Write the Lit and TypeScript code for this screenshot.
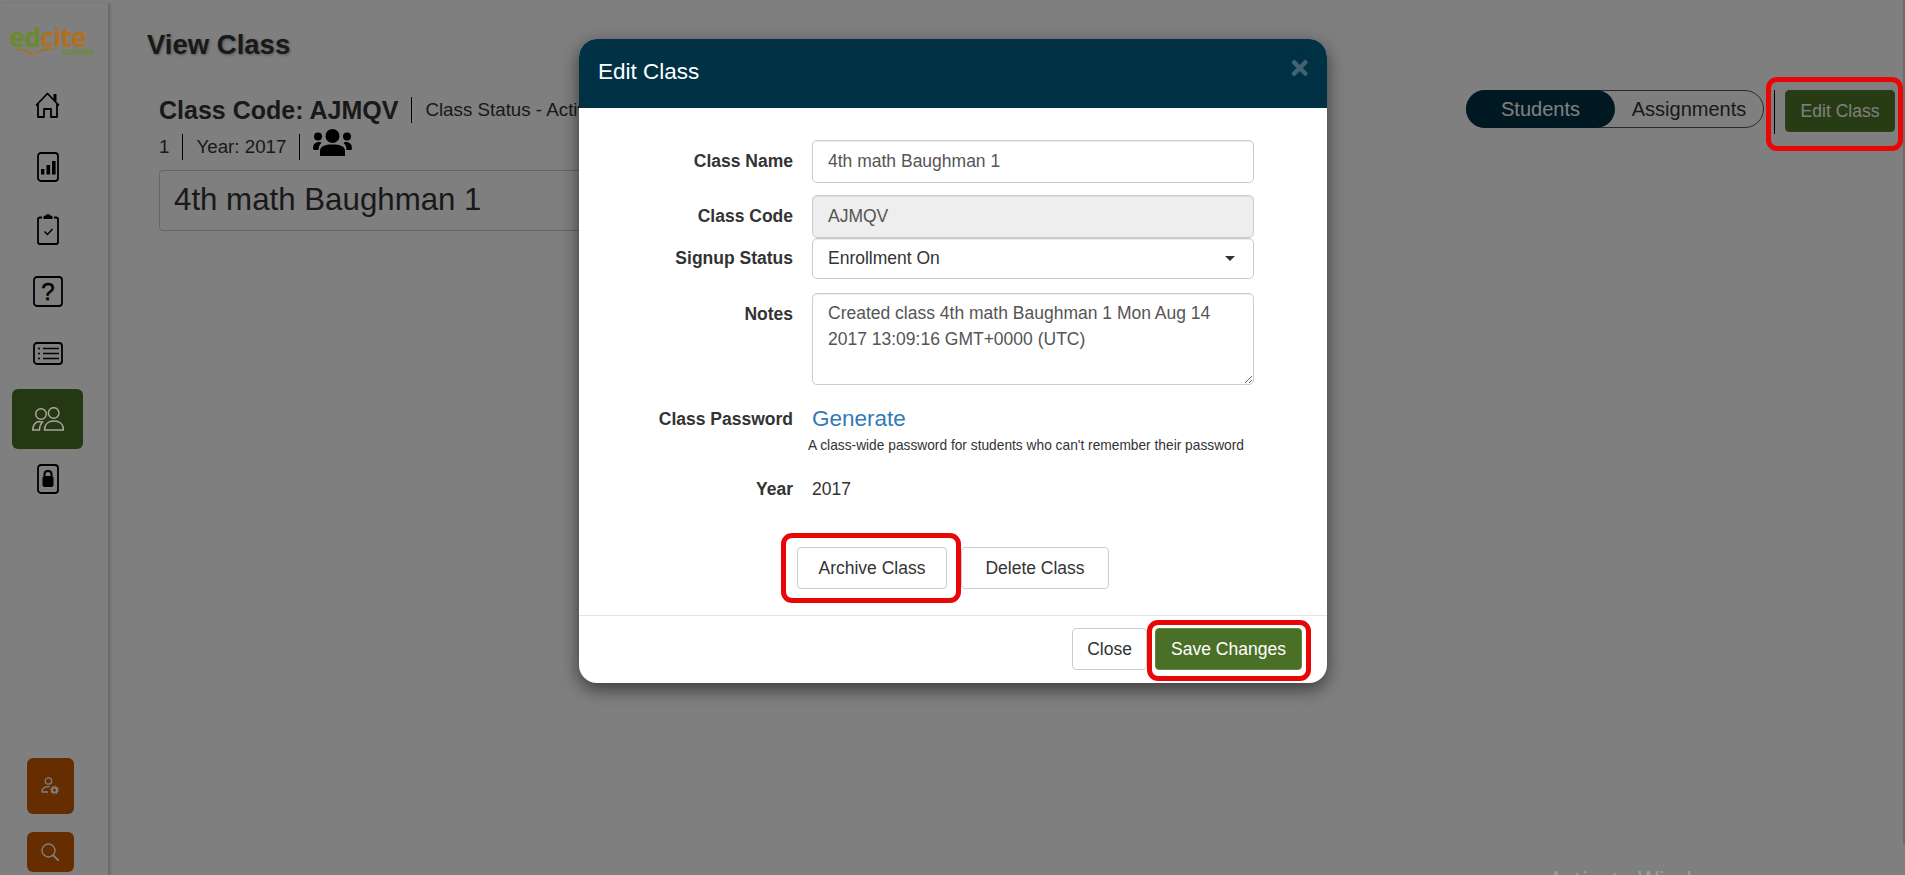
import { LitElement, html, css, svg } from "lit";
import { customElement } from "lit/decorators.js";

const FONT = css`"Liberation Sans", Arial, sans-serif`;
const INK = "#000";

const navIcons = [
  { w: 25, h: 26, body: svg`<path d="M1 13.500 L12.500 1.500 L24 13.500 M3 11.500 V25 H9 V17 H16 V25 H22 V11.500" fill="none" stroke="${INK}" stroke-width="1.800" stroke-linejoin="round"/><rect x="18.500" y="2" width="3" height="7" fill="${INK}"/>` },
  { w: 22, h: 30, body: svg`<rect x="1" y="1" width="20" height="28" rx="3" fill="none" stroke="${INK}" stroke-width="1.800"/><rect x="4" y="17" width="3.400" height="5.500" fill="${INK}"/><rect x="9.500" y="13" width="3.600" height="9.500" fill="${INK}"/><rect x="15" y="9" width="3.600" height="13.500" fill="${INK}"/>` },
  { w: 22, h: 31, body: svg`<path d="M5 3.500 H3 Q1 3.500 1 5.500 V28 Q1 30 3 30 H19 Q21 30 21 28 V5.500 Q21 3.500 19 3.500 H17" fill="none" stroke="${INK}" stroke-width="1.800"/><path d="M6.500 5 V3 Q6.500 1.500 8 1.500 H9 Q9.500 0 11 0 Q12.500 0 13 1.500 H14 Q15.500 1.500 15.500 3 V5 Z" fill="${INK}"/><path d="M7.500 17.500 L10.500 20.500 L15.500 15" fill="none" stroke="${INK}" stroke-width="1.500"/>` },
];

@customElement("app-root")
export class AppRoot extends LitElement {
  static styles = css`
    :host { display: block; height: 875px; width: 1905px; position: relative; overflow: hidden; background: #fff; font-family: ${FONT}; color: #333; }
    * { box-sizing: border-box; }
    .page { display: flex; height: 875px; }
    .side { width: 110px; flex: none; margin-top: 3px; border-right: 2px solid #d8d8d8; box-shadow: 1px 0 2px rgba(0,0,0,.12); display: flex; flex-direction: column; align-items: center; }
    .logo { position: relative; z-index: 2; align-self: flex-start; margin: 23px 0 0 9px; height: 37px; width: 90px; }
    .logo-word { display: block; font: 700 27px/22px "Open Sans", sans-serif; letter-spacing: -1px; color: #b0701e; white-space: nowrap; }
    .logo-word b { font-weight: 700; color: #6b8a2c; }
    .logo-row { display: flex; align-items: flex-start; gap: 5px; margin-left: 1px; }
    .logo-sub { font: 700 8.500px/8px "Liberation Sans", sans-serif; color: #6b8a2c; }
    .nav { display: flex; flex-direction: column; align-items: center; margin: 11px 13px 0 0; }
    .nav-item { width: 71px; height: 62px; display: flex; align-items: center; justify-content: center; border-radius: 6px; }
    .nav-item.on { background: #4a7028; height: 60px; margin: 5px 0 -1px; }
    .nav-item svg { display: block; }
    .nav-item.on svg { position: relative; z-index: 2; }
    .side-foot { margin: auto 8px 3px 0; display: flex; flex-direction: column; align-items: center; gap: 18px; }
    .tool { width: 47px; height: 56px; background: #cc5a00; border-radius: 6px; display: flex; align-items: center; justify-content: center; }
    .tool.short { height: 40px; }

    .main { flex: 1; min-width: 0; padding: 28px 0 0 37px; }
    h1 { font-size: 27.500px; line-height: 34px; font-weight: 700; margin: 0; color: #333; text-shadow: 1px 1px 3px rgba(0,0,0,.35); }
    .content { display: flex; justify-content: space-between; padding: 0 10px 0 12px; margin-top: 30px; }
    .info { width: 450px; }
    .line { display: flex; align-items: center; white-space: nowrap; height: 36px; font-size: 18.750px; }
    .line + .line { padding-top: 1px; }
    .code { font-size: 25px; font-weight: 700; }
    .sep { width: 1px; background: #000; height: 26px; margin: 0 13px; flex: none; }
    .group { margin-top: -9px; flex: none; }
    .name { border: 1px solid #ccc; border-radius: 4px; height: 61px; width: 700px; margin-top: 6px; font-size: 31.250px; padding: 0 14px 2px; display: flex; align-items: center; white-space: nowrap; }
    .right { display: flex; align-items: flex-start; margin-top: -2px; }
    .toggle { display: flex; width: 298px; height: 38px; border: 1px solid #555; border-radius: 20px; font-size: 20px; }
    .toggle span { display: flex; align-items: center; justify-content: center; border-radius: 20px; }
    .toggle .t-on { width: 149px; background: #013145; color: #fff; margin: -1px 0 -1px -1px; height: 38px; }
    .toggle .t-off { flex: 1; color: #333; }
    .vr { width: 1px; height: 44px; background: #000; margin: 0 10px 0 10px; }
    .edit { width: 110px; height: 42px; background: #4f7729; color: #fff; border: 1px solid #5b8534; border-radius: 4px; display: flex; align-items: center; justify-content: center; font-size: 17.500px; }

    .backdrop { position: absolute; inset: 0; background: rgba(0,0,0,.5); z-index: 1; }
    .scroll { position: absolute; right: 0; top: 0; width: 2px; height: 844px; background: #6c6c6c; z-index: 2; }
    .watermark { position: absolute; left: 1549px; top: 863px; font: 400 22.500px/32px "Open Sans", sans-serif; color: #a0a0a0; white-space: nowrap; z-index: 2; }

    .modal { position: absolute; z-index: 3; left: 579px; top: 39px; width: 748px; height: 644px; background: #fff; border-radius: 18px; box-shadow: 0 6px 18px rgba(0,0,0,.55); overflow: hidden; display: flex; flex-direction: column; }
    .m-head { height: 69px; background: #013145; color: #fff; flex: none; display: flex; justify-content: space-between; padding: 16px 18px 0 19px; }
    .m-title { font-size: 22.500px; line-height: 34px; }
    .x { font-size: 32px; line-height: 24px; font-weight: 700; color: #fff; opacity: .25; text-shadow: 0 1px 0 #fff; }
    .m-body { flex: 1; padding-top: 32px; }
    .row { display: flex; }
    .lab { width: 214px; text-align: right; font-weight: 700; font-size: 17.500px; color: #333; flex: none; margin-right: 19px; }
    .ctl { width: 442px; flex: none; border: 1px solid #ccc; border-radius: 5px; font: 17.500px ${FONT}; color: #555; box-shadow: inset 0 1px 1px rgba(0,0,0,.075); background: #fff; padding: 0 15px; outline: none; display: flex; align-items: center; }
    .r1 { height: 43px; line-height: 43px; margin-bottom: 12px; }
    .r1 .lab { line-height: 42px; }
    .r2 { height: 43px; }
    .r2 .lab { line-height: 43px; }
    .r2 .ctl { background: #eee; }
    .r3 { height: 41px; margin-bottom: 14px; }
    .r3 .lab { line-height: 41px; }
    .r3 .ctl { justify-content: space-between; color: #333; }
    .caret { width: 0; height: 0; border: 5px solid transparent; border-top: 5px solid #333; border-bottom: 0; margin-right: 3px; }
    .r4 { height: 92px; margin-bottom: 20px; }
    .r4 .lab { line-height: 42px; }
    textarea.ctl { display: block; padding: 7px 15px; height: 92px; line-height: 25.500px; resize: both; }
    .r5 .lab { line-height: 28px; }
    .gen { font-size: 22.500px; line-height: 28px; color: #337ab7; }
    .hint { font-size: 13.750px; line-height: 18px; color: #333; margin: 4px 0 0 229px; }
    .r6 { margin-top: 23px; }
    .r6 .lab { line-height: 22px; }
    .r6 .val { font-size: 17.500px; line-height: 22px; color: #333; }
    .btns { display: flex; padding-left: 218px; margin-top: 47px; gap: 14px; }
    .btn { height: 42px; background: #fff; border: 1px solid #ccc; border-radius: 4px; font-size: 17.500px; color: #333; display: flex; align-items: center; justify-content: center; }
    .b-arch { width: 150px; }
    .b-del { width: 148px; }
    .m-foot { height: 68px; border-top: 1px solid #e5e5e5; display: flex; justify-content: flex-end; gap: 8px; padding: 12px 25px 0 0; flex: none; }
    .b-close { width: 75px; }
    .b-save { width: 147px; background: #4a7028; border-color: #5b8f34; color: #fff; }
    .mark { position: absolute; z-index: 4; border: 5px solid #ea0606; border-radius: 11px; pointer-events: none; }
  `;

  render() {
    return html`
      <div class="page">
        <aside class="side">
          <div class="logo">
            <span class="logo-word"><b>ed</b>cite</span>
            <div class="logo-row">
              <svg width="47" height="7" viewBox="0 0 47 7"><path d="M0 1.500 C8 0 17 1.500 23 5.500 C24 6 24 6 25 5.500 C30 1.500 38 -0.500 46 1 C38 1.500 30 3.500 24.500 7 H22 C17 3.500 8 1.500 0 1.500Z" fill="#b0701e"/><path d="M25 4.500 C30 1 38 -0.500 46 1 C38 0.500 31 2 25 4.500Z" fill="#6b8a2c"/><path d="M4 0.500 C10 0 17 1.500 22 4.500 C16 2 10 1 4 0.500Z" fill="#6b8a2c"/></svg>
              <span class="logo-sub">schools</span>
            </div>
          </div>
          <nav class="nav">
            ${navIcons.map((i) => html`<div class="nav-item"><svg width=${i.w} height=${i.h} viewBox="0 0 ${i.w} ${i.h}">${i.body}</svg></div>`)}
            <div class="nav-item"><svg width="30" height="31" viewBox="0 0 30 31"><rect x="1" y="1" width="28" height="29" rx="3" fill="none" stroke="#000" stroke-width="1.800"/><text x="15" y="24" text-anchor="middle" font-family="Liberation Sans" font-size="24" fill="#000" stroke="#000" stroke-width=".5">?</text></svg></div>
            <div class="nav-item"><svg width="30" height="23" viewBox="0 0 30 23"><rect x="1" y="1" width="28" height="21" rx="3" fill="none" stroke="#000" stroke-width="1.800"/><path d="M10 6.500 H26 M10 11.500 H26 M10 16.500 H26" stroke="#000" stroke-width="1.500"/><path d="M5 6.500 H7 M5 11.500 H7 M5 16.500 H7" stroke="#000" stroke-width="1.500"/></svg></div>
            <div class="nav-item on"><svg width="32" height="24" viewBox="0 0 32 24"><g fill="none" stroke="#a6a698" stroke-width="1.500"><circle cx="9" cy="7" r="5.300"/><circle cx="21.700" cy="6" r="5.300"/><path d="M12.500 23 C12.500 17 16.500 14 22 14 C27.500 14 31.500 17 31.500 23 Z"/><path d="M.8 23 C.8 18.500 3 15.500 6.500 14.500 L10.500 15 C8.500 17 7.500 20 7.500 23 Z"/></g></svg></div>
            <div class="nav-item"><svg width="22" height="30" viewBox="0 0 22 30"><rect x="1" y="1" width="20" height="28" rx="3" fill="none" stroke="#000" stroke-width="1.800"/><rect x="5.500" y="12" width="11" height="11" rx="2" fill="#000"/><path d="M7.500 12 V10 C7.500 6 14.500 6 14.500 10 V12" fill="none" stroke="#000" stroke-width="2"/></svg></div>
          </nav>
          <div class="side-foot">
            <div class="tool"><svg width="18" height="18" viewBox="0 0 18 18"><circle cx="7.500" cy="4" r="3.200" fill="none" stroke="#fff" stroke-width="1.300"/><path d="M.7 15 C1 11 4 9.500 8.500 9.500 M.7 15 H7" fill="none" stroke="#fff" stroke-width="1.300"/><circle cx="13.500" cy="13" r="2.500" fill="none" stroke="#fff" stroke-width="2"/><circle cx="13.500" cy="13" r="4" fill="none" stroke="#fff" stroke-width="1" stroke-dasharray="1.500 1.600"/></svg></div>
            <div class="tool short"><svg width="18" height="18" viewBox="0 0 18 18"><circle cx="7.500" cy="7.500" r="6.500" fill="none" stroke="#fff" stroke-width="1.400"/><path d="M12 12 L18 18" stroke="#fff" stroke-width="1.800"/></svg></div>
          </div>
        </aside>
        <main class="main">
          <h1>View Class</h1>
          <div class="content">
            <div class="info">
              <div class="line"><span class="code">Class Code: AJMQV</span><span class="sep"></span>Class Status - Active</div>
              <div class="line">1<span class="sep"></span>Year: 2017<span class="sep"></span>
                <svg class="group" width="39" height="27" viewBox="0 0 39 27"><circle cx="19.500" cy="7" r="7" fill="#000"/><circle cx="5" cy="7.500" r="4" fill="#000"/><circle cx="34" cy="7.500" r="4" fill="#000"/><path d="M7 27 V22 C7 17 12 15.500 19.500 15.500 C27 15.500 32 17 32 22 V27 Z" fill="#000"/><path d="M0 20 C0 15 2 13 6.500 13 C7.500 13 8 13.500 8.500 14 C6.500 15.500 5.500 17.500 5.500 21 H1 Z M39 20 C39 15 37 13 32.500 13 C31.500 13 31 13.500 30.500 14 C32.500 15.500 33.500 17.500 33.500 21 H38 Z" fill="#000"/></svg>
              </div>
              <div class="name">4th math Baughman 1</div>
            </div>
            <div class="right">
              <div class="toggle"><span class="t-on">Students</span><span class="t-off">Assignments</span></div>
              <div class="vr"></div>
              <div class="edit">Edit Class</div>
            </div>
          </div>
        </main>
      </div>
      <div class="backdrop"></div>
      <div class="scroll"></div>
      <div class="watermark">Activate Windows</div>
      <div class="modal">
        <div class="m-head"><div class="m-title">Edit Class</div><div class="x">×</div></div>
        <div class="m-body">
          <div class="row r1"><div class="lab">Class Name</div><input class="ctl" value="4th math Baughman 1" /></div>
          <div class="row r2"><div class="lab">Class Code</div><input class="ctl" value="AJMQV" disabled /></div>
          <div class="row r3"><div class="lab">Signup Status</div><div class="ctl">Enrollment On<span class="caret"></span></div></div>
          <div class="row r4"><div class="lab">Notes</div><textarea class="ctl">Created class 4th math Baughman 1 Mon Aug 14 2017 13:09:16 GMT+0000 (UTC)</textarea></div>
          <div class="row r5"><div class="lab">Class Password</div><div class="gen">Generate</div></div>
          <div class="hint">A class-wide password for students who can't remember their password</div>
          <div class="row r6"><div class="lab">Year</div><div class="val">2017</div></div>
          <div class="btns"><div class="btn b-arch">Archive Class</div><div class="btn b-del">Delete Class</div></div>
        </div>
        <div class="m-foot"><div class="btn b-close">Close</div><div class="btn b-save">Save Changes</div></div>
      </div>
      <div class="mark" style="left:1766px;top:77px;width:137px;height:74px"></div>
      <div class="mark" style="left:781px;top:533px;width:180px;height:70px"></div>
      <div class="mark" style="left:1147px;top:620px;width:164px;height:61px"></div>
    `;
  }
}
